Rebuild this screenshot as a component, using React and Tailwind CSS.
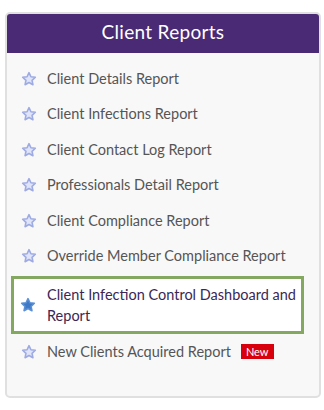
import React from "react";

const reports = [
  { label: "Client Details Report" },
  { label: "Client Infections Report" },
  { label: "Client Contact Log Report" },
  { label: "Professionals Detail Report" },
  { label: "Client Compliance Report" },
  { label: "Override Member Compliance Report" },
  { label: "Client Infection Control Dashboard and Report", active: true },
  { label: "New Clients Acquired Report", isNew: true },
];

const Star = ({ filled }) => (
  <svg width="16" height="16" viewBox="0 0 24 24" className="shrink-0">
    <path
      d="M12 2.5l2.9 6.1 6.6.8-4.9 4.6 1.3 6.6L12 17.3l-5.9 3.3 1.3-6.6-4.9-4.6 6.6-.8z"
      fill={filled ? "#3f78c4" : "#dfe4f8"}
      stroke={filled ? "#5a8fd6" : "#9eaae2"}
      strokeWidth="2.4"
      strokeLinejoin="round"
    />
  </svg>
);

const App = () => {
  return (
    <div className="bg-white w-[324px] h-[410px] pt-3 px-[5px]" style={{ fontFamily: "Lato, 'Open Sans', sans-serif" }}>
      <div className="w-[316px] h-[386px] rounded-[5px] border-2 border-[#e0e0e0] bg-[#f8f8f8] overflow-hidden">
        <div className="h-[41px] bg-[#4a2a74] flex items-center justify-center -mx-[2px] -mt-[2px] rounded-t-[5px]">
          <h1 className="text-white text-[19px] tracking-[0.3px]">Client Reports</h1>
        </div>
        <ul className="pt-[8px] px-[4px]">
          {reports.map((r) =>
            r.active ? (
              <li key={r.label} className="mt-[2px] mb-0 border-[3px] border-[#84a85f] bg-white flex items-center gap-[11px] pl-[6px] pr-1 py-[5px] w-[293px]">
                <Star filled />
                <span className="text-[#3a2757] text-[14.5px] leading-[21px] w-[255px]">{r.label}</span>
              </li>
            ) : (
              <li key={r.label} className="flex items-center gap-[10px] pl-[10px] h-[35.5px]">
                <Star />
                <span className="text-[#555] text-[14.5px]">{r.label}</span>
                {r.isNew && (
                  <span className="bg-[#d9000d] text-white text-[11px] leading-[15px] px-[5px]">New</span>
                )}
              </li>
            )
          )}
        </ul>
      </div>
    </div>
  );
};

export default App;
